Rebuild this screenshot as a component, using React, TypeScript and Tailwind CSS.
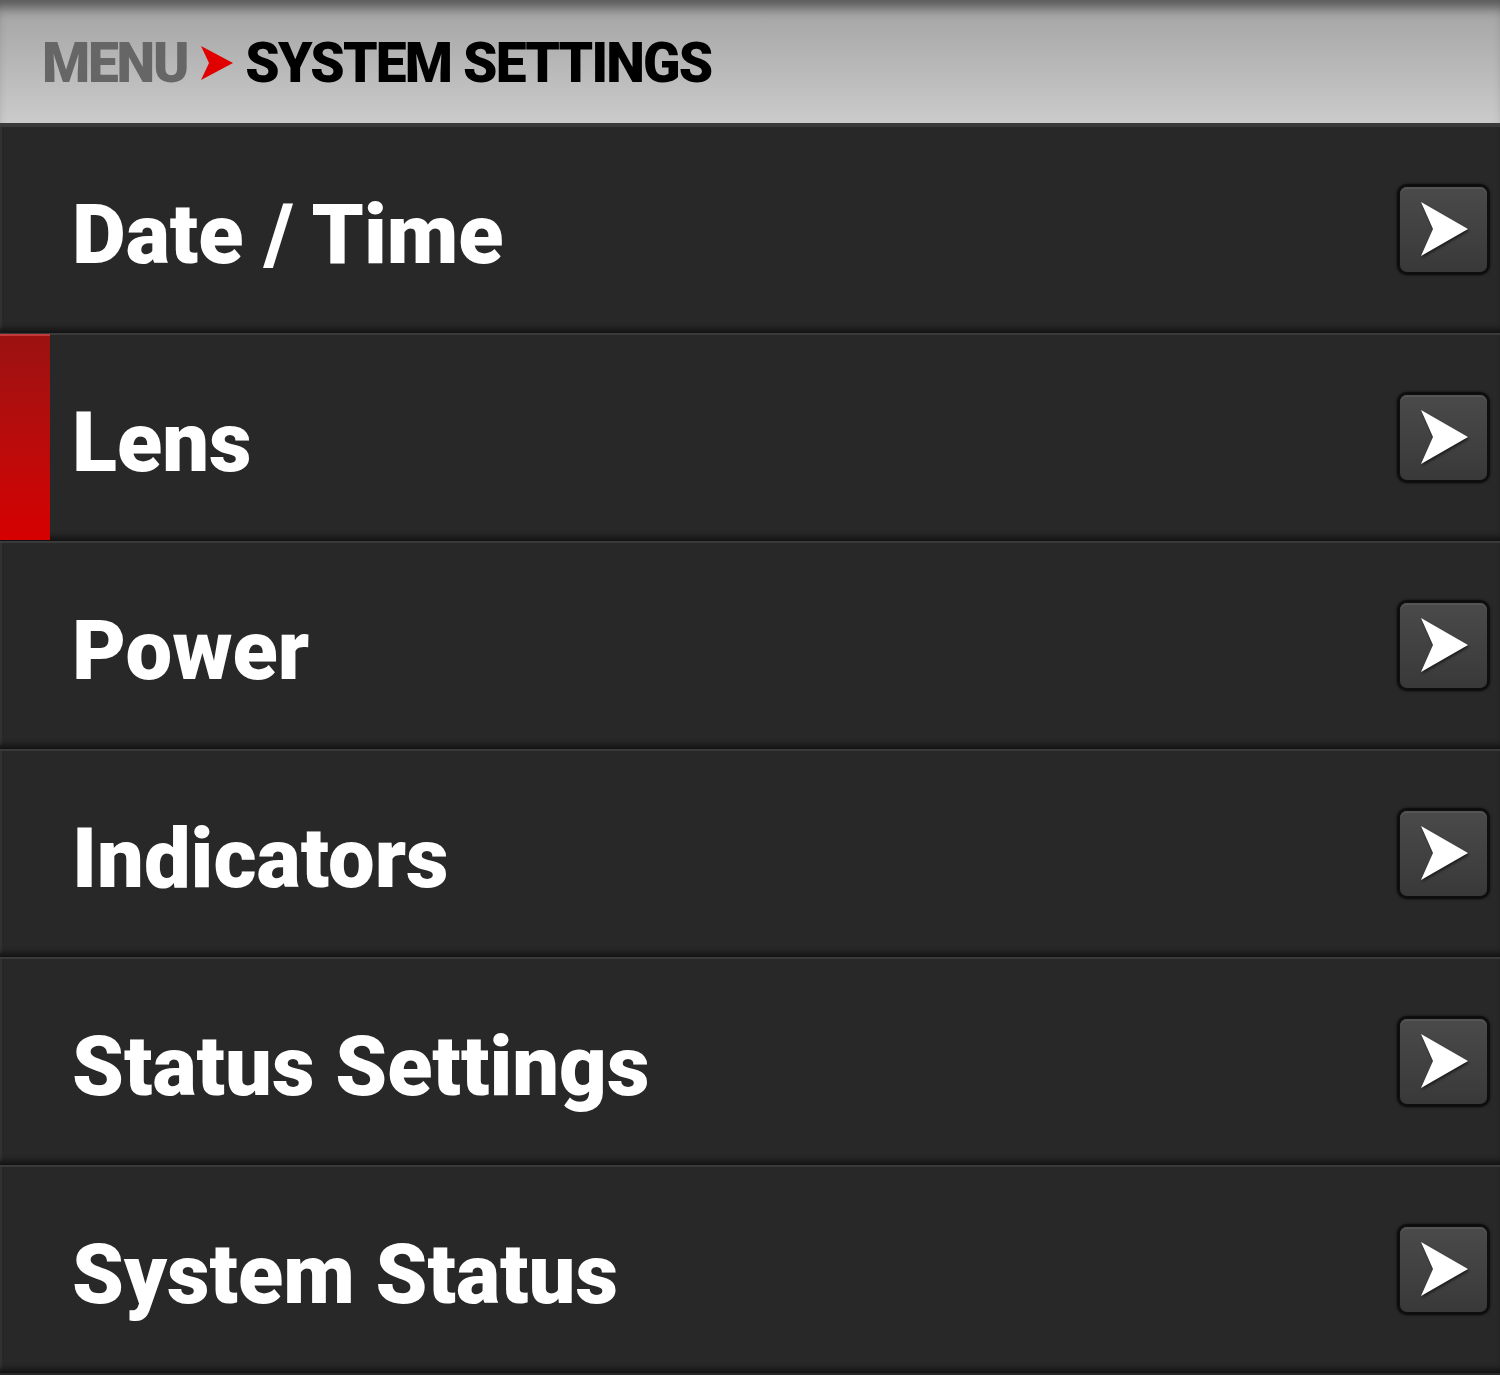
import React from 'react';

const items = ['Date / Time', 'Lens', 'Power', 'Indicators', 'Status Settings', 'System Status'];

function ArrowButton() {
  return (
    <div className="w-[93px] h-[91px] rounded-[10px] bg-[#0e0e0e] p-[3px] shadow-[0_0_3px_rgba(0,0,0,0.6)]">
      <div className="w-full h-full rounded-[7px] bg-gradient-to-b from-[#4a4a4a] to-[#393939] shadow-[inset_0_2px_0_#555] flex items-center justify-center">
        <svg width="50" height="56" viewBox="0 0 50 56" className="ml-[2px] drop-shadow-[1px_2px_1px_rgba(0,0,0,0.5)]">
          <path d="M1 1 L48 28 L1 55 L13 28 Z" fill="#ffffff" />
        </svg>
      </div>
    </div>
  );
}

export default function App() {
  return (
    <div className="w-[1500px] h-[1375px] bg-[#282828] overflow-hidden" style={{ fontFamily: 'Roboto, "Liberation Sans", sans-serif' }}>
      {/* Header */}
      <div className="h-[125px] bg-gradient-to-b from-[#a2a2a2] to-[#cbcbcb] shadow-[inset_0_14px_12px_-6px_rgba(0,0,0,0.45)] border-b-2 border-[#3a3a3a] flex items-center pl-[42px]">
        <span className="mt-[4px] text-[55px] font-black text-[#666666] tracking-[-2.2px] leading-none">MENU</span>
        <svg width="34" height="36" viewBox="0 0 34 36" className="ml-[13px] mr-[11px] mt-[2px]">
          <path d="M1 1 L33 18 L1 35 L9 18 Z" fill="#e00000" />
        </svg>
        <span className="mt-[4px] text-[55px] font-black text-black tracking-[-1.8px] leading-none">SYSTEM SETTINGS</span>
      </div>

      {/* Menu rows */}
      {items.map((item) => (
        <div
          key={item}
          className="relative h-[208px] flex items-center justify-between pl-[72px] pr-[10px] bg-[#282828] shadow-[inset_0_2px_0_#3a3a3a,inset_0_-8px_6px_-4px_#121212,inset_2px_0_0_#353535]"
        >
          {item === 'Lens' && (
            <div className="absolute left-0 top-[1px] bottom-[1px] w-[50px] bg-gradient-to-b from-[#9b1111] to-[#d60000] shadow-[inset_0_2px_0_#c23a3a]" />
          )}
          <span className="mt-[10px] text-[83px] font-black text-white leading-none">{item}</span>
          <ArrowButton />
        </div>
      ))}
    </div>
  );
}
